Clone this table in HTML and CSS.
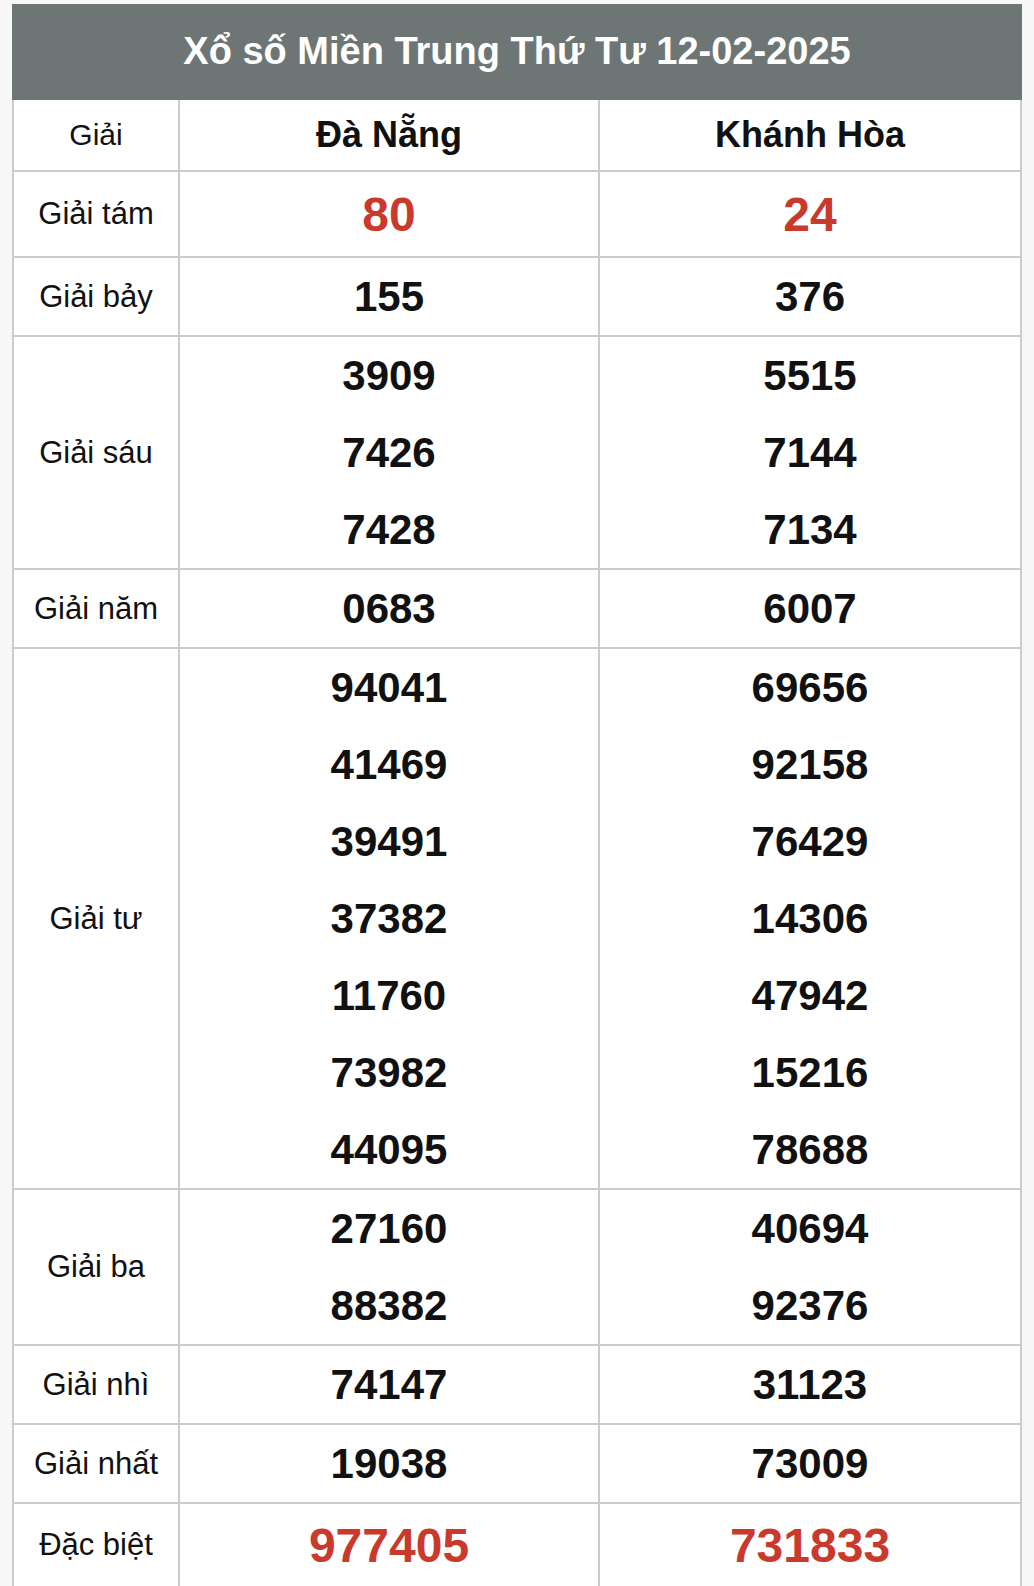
FILE: index.html
```html
<!DOCTYPE html>
<html lang="vi">
<head>
<meta charset="utf-8">
<title>Xổ số Miền Trung Thứ Tư 12-02-2025</title>
<link rel="stylesheet" href="styles.css">
</head>
<body>
<div class="board">
  <div class="title">Xổ số Miền Trung Thứ Tư 12-02-2025</div>
  <div class="row row-head">
    <div class="cell label">Giải</div>
    <div class="cell prov">Đà Nẵng</div>
    <div class="cell prov">Khánh Hòa</div>
  </div>
  <div class="row row-tam">
    <div class="cell label">Giải tám</div>
    <div class="cell nums"><span class="num red">80</span></div>
    <div class="cell nums"><span class="num red">24</span></div>
  </div>
  <div class="row">
    <div class="cell label">Giải bảy</div>
    <div class="cell nums"><span class="num">155</span></div>
    <div class="cell nums"><span class="num">376</span></div>
  </div>
  <div class="row">
    <div class="cell label">Giải sáu</div>
    <div class="cell nums"><span class="num">3909</span><span class="num">7426</span><span class="num">7428</span></div>
    <div class="cell nums"><span class="num">5515</span><span class="num">7144</span><span class="num">7134</span></div>
  </div>
  <div class="row">
    <div class="cell label">Giải năm</div>
    <div class="cell nums"><span class="num">0683</span></div>
    <div class="cell nums"><span class="num">6007</span></div>
  </div>
  <div class="row">
    <div class="cell label">Giải tư</div>
    <div class="cell nums"><span class="num">94041</span><span class="num">41469</span><span class="num">39491</span><span class="num">37382</span><span class="num">11760</span><span class="num">73982</span><span class="num">44095</span></div>
    <div class="cell nums"><span class="num">69656</span><span class="num">92158</span><span class="num">76429</span><span class="num">14306</span><span class="num">47942</span><span class="num">15216</span><span class="num">78688</span></div>
  </div>
  <div class="row">
    <div class="cell label">Giải ba</div>
    <div class="cell nums"><span class="num">27160</span><span class="num">88382</span></div>
    <div class="cell nums"><span class="num">40694</span><span class="num">92376</span></div>
  </div>
  <div class="row">
    <div class="cell label">Giải nhì</div>
    <div class="cell nums"><span class="num">74147</span></div>
    <div class="cell nums"><span class="num">31123</span></div>
  </div>
  <div class="row">
    <div class="cell label">Giải nhất</div>
    <div class="cell nums"><span class="num">19038</span></div>
    <div class="cell nums"><span class="num">73009</span></div>
  </div>
  <div class="row row-db">
    <div class="cell label">Đặc biệt</div>
    <div class="cell nums"><span class="num red big">977405</span></div>
    <div class="cell nums"><span class="num red big">731833</span></div>
  </div>
</div>
</body>
</html>
```
FILE: styles.css
```css
* { box-sizing: border-box; }
html, body { margin: 0; padding: 0; }
body {
  background: #f7f7f7;
  font-family: "Liberation Sans", Arial, sans-serif;
  color: #111;
}
.board {
  width: 1010px;
  margin: 4px 0 0 12px;
  background: #fff;
}
.title {
  height: 96px;
  background: #6d7575;
  color: #fff;
  font-weight: bold;
  font-size: 38px;
  display: flex;
  align-items: center;
  justify-content: center;
  padding-bottom: 2px;
}
.row {
  display: grid;
  grid-template-columns: 168px 420px 422px;
}
.cell {
  border-bottom: 2px solid #cccccc;
  border-right: 2px solid #cccccc;
  display: flex;
  align-items: center;
  justify-content: center;
}
.label {
  border-left: 2px solid #cccccc;
  font-size: 31px;
  color: #111;
}
.row-head .cell { height: 72px; }
.row-head .label { font-size: 30px; }
.prov {
  font-weight: bold;
  font-size: 36px;
  color: #111;
}
.nums {
  flex-direction: column;
}
.num {
  display: block;
  height: 77px;
  line-height: 77px;
  font-weight: bold;
  font-size: 42px;
  color: #111;
}
.row-tam .cell { height: 86px; }
.row-db .cell { height: 84px; }
.red { color: #c93a2c; font-size: 48px; }
.big { font-size: 48px; }
```
